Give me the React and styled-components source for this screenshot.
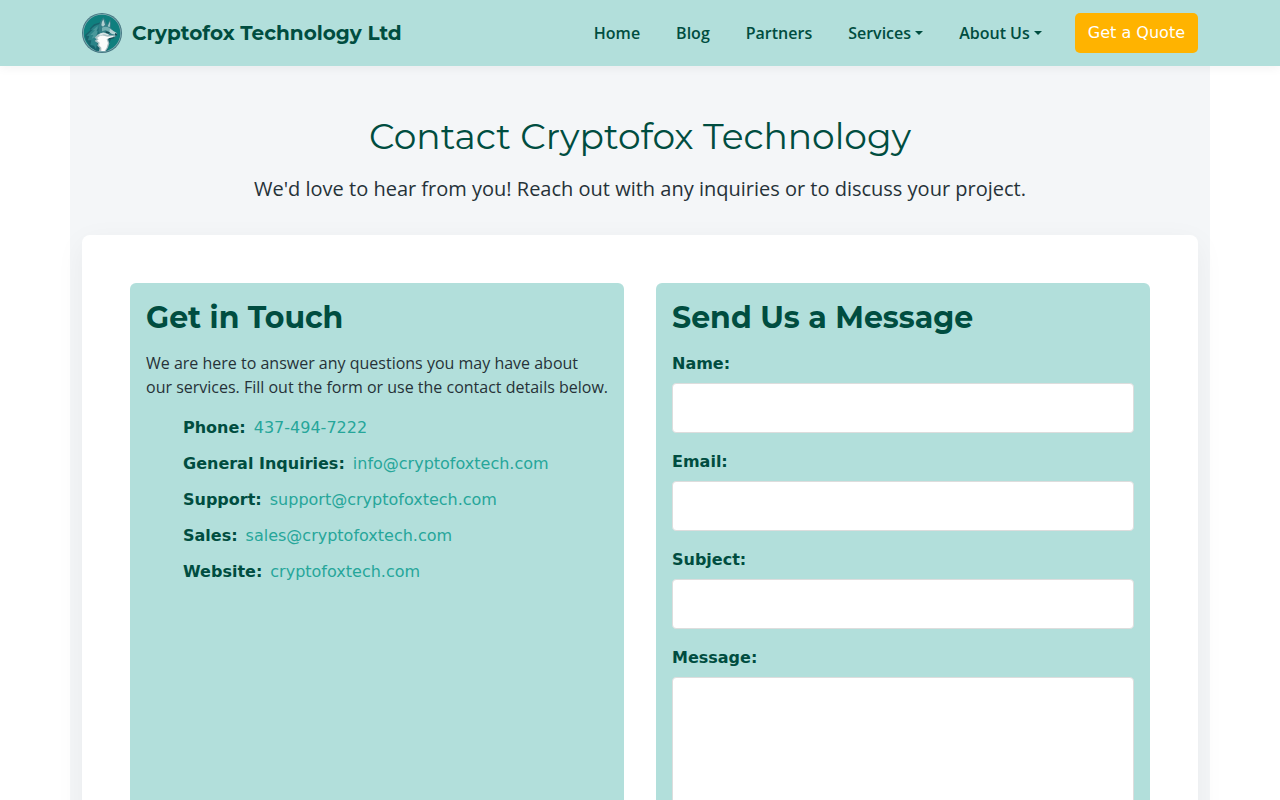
import React from "react";
import styled, { createGlobalStyle } from "styled-components";

const heading = `"Montserrat", "Inter", "Liberation Sans", sans-serif`;
const body = `"Open Sans", "Noto Sans", sans-serif`;
const system = `"DejaVu Sans", sans-serif`;

const GlobalStyle = createGlobalStyle`
  *, *::before, *::after { box-sizing: border-box; }
  html, body, #root { height: 100%; }
  body {
    margin: 0;
    overflow: hidden;
    background: #fff;
    color: #263238;
    font: 400 16px/24px ${system};
  }
`;

const Page = styled.div`
  height: 100vh;
  overflow: hidden;
`;

const Navbar = styled.header`
  position: relative;
  z-index: 1;
  height: 66px;
  background: #b2dfdb;
  box-shadow: 0 2px 10px rgba(0, 0, 0, 0.05);
`;

const NavInner = styled.div`
  width: 1140px;
  height: 100%;
  margin: 0 auto;
  padding: 0 12px;
  display: flex;
  align-items: center;
  justify-content: space-between;
`;

const Brand = styled.a`
  display: flex;
  align-items: center;
  gap: 10px;
  color: #004d40;
  font: 700 20px/30px ${heading};
  white-space: nowrap;
`;

const Logo = styled.svg`
  width: 40px;
  height: 40px;
  display: block;
`;

const Nav = styled.nav`
  display: flex;
  align-items: center;
  gap: 36px;
`;

const NavLink = styled.a`
  display: flex;
  align-items: center;
  color: #004d40;
  font: 600 16px/24px ${body};
  white-space: nowrap;
`;

const Caret = styled.span`
  margin-left: 4.08px;
  border: 4.8px solid transparent;
  border-top-color: currentColor;
  border-bottom: 0;
`;

const QuoteButton = styled.a`
  height: 40px;
  margin-left: -3px;
  padding: 8px 13px;
  border-radius: 5px;
  background: #ffb300;
  color: #fff;
  white-space: nowrap;
`;

const Main = styled.main`
  width: 1140px;
  margin: 0 auto;
  padding: 49px 12px 48px;
  background: #f4f6f8;
`;

const Title = styled.h1`
  margin: 0 0 16px;
  color: #004d40;
  font: 400 36px/43px ${heading};
  text-align: center;
`;

const Lead = styled.p`
  margin: 0 0 31px;
  font: 400 20px/30px ${body};
  text-align: center;
`;

const Card = styled.section`
  min-height: 700px;
  padding: 48px;
  display: grid;
  grid-template-columns: 1fr 1fr;
  gap: 32px;
  border-radius: 8px;
  background: #fff;
  box-shadow: 0 8px 30px rgba(0, 0, 0, 0.05);
`;

const Panel = styled.div`
  padding: 16px;
  border-radius: 6px;
  background: #b2dfdb;
`;

const PanelTitle = styled.h2`
  margin: 0 0 15px;
  padding-top: 1px;
  color: #004d40;
  font: 700 30px/36px ${heading};
`;

const Intro = styled.p`
  margin: 0 0 16px;
  font: 400 16px/24px ${body};
`;

const ContactList = styled.ul`
  margin: 0;
  padding: 1px 0 0 37px;
  display: grid;
  gap: 12px;
  list-style: none;
`;

const ContactItem = styled.li`
  display: flex;
  gap: 8px;
`;

const Label = styled.strong`
  color: #004d40;
  font-weight: 700;
`;

const ContactLink = styled.a`
  color: #26a69a;
`;

const Field = styled.label`
  display: grid;
  gap: 7px;
  margin-bottom: 16px;
  padding-top: 1px;
`;

const Input = styled.input`
  width: 100%;
  height: ${(p) => p.$height || 50}px;
  padding: 12px;
  border: 1px solid #ddd;
  border-radius: 4px;
  background: #fff;
  resize: none;
`;

const links = [
  { text: "Home" },
  { text: "Blog" },
  { text: "Partners" },
  { text: "Services", menu: true },
  { text: "About Us", menu: true },
];

const contacts = [
  ["Phone:", "437-494-7222"],
  ["General Inquiries:", "info@cryptofoxtech.com"],
  ["Support:", "support@cryptofoxtech.com"],
  ["Sales:", "sales@cryptofoxtech.com"],
  ["Website:", "cryptofoxtech.com"],
];

function FoxLogo() {
  return (
    <Logo viewBox="0 0 120 120" aria-hidden="true">
      <circle cx="60" cy="60" r="60" fill="#477884" />
      <circle cx="60" cy="60" r="57" fill="#86b0b5" />
      <circle cx="60" cy="60" r="55" fill="#0f7f7e" />
      <path d="M56 28 L36 34 L23 47 L26 50 L9 66 L12 80 L24 101 L42 113 L76 113 L82 91 L88 77Z" fill="#17636c" />
      <path d="M56 32 Q35 36 26 50 L32 50 L13 68 L22 69 L17 82 L28 82 L25 96 L36 98 L42 109 L46 88 L60 66Z" fill="#2a8388" />
      <path d="M47 39 L32 52 L39 52 L25 66 L34 66 L29 77 L40 73 L45 62Z" fill="#4a989b" />
      <path d="M52 40 L43 55 L51 52 L43 68 L59 58 L59 43Z" fill="#206d76" />
      <path d="M50 44 Q53 24 64 13 Q72 22 75 36 L85 18 Q89 34 86 44 L94 53 L105 60 Q108 67 102 72 L87 75 L74 79 L58 71 L50 54Z" fill="#347f87" />
      <path d="M58 37 Q59 26 64 19 L69 35 L63 41Z" fill="#b4cfd1" />
      <path d="M77 40 L84 25 Q85 35 83 43Z" fill="#a5c9cb" />
      <path d="M60 44 Q71 38 83 45 L94 55 L84 58 L71 52 L60 55Z" fill="#75b0b2" />
      <path d="M84 47 L94 54 L104 60 L102 65 L90 63 L82 58Z" fill="#b6d3d4" />
      <path d="M38 74 Q45 63 57 60 L72 65 L84 67 L100 67 L97 73 L84 76 L78 79 L82 91 L78 104 L71 115 L51 115 L53 105 L46 98 L48 91 L38 84 L44 79Z" fill="#a7bec2" />
      <path d="M45 75 Q54 65 66 68 L77 71 L94 69 L92 73 L79 76 L74 79 L78 90 L74 104 L68 114 L58 114 L58 104 L51 97 L53 89 L45 83 L50 79Z" fill="#fbfcfc" />
      <path d="M50 66 Q60 54 72 61 L82 64 L76 67 L64 64 L55 68Z" fill="#d9e6e7" />
      <path d="M71 55 L84 58 L80 62 L72 60Z" fill="#174b54" />
      <path d="M99 60 Q108 62 104 68 L99 66Z M79 76 L98 72 L96 76 L83 79Z" fill="#194c55" />
    </Logo>
  );
}

export default function App() {
  return (
    <Page>
      <GlobalStyle />
      <Navbar>
        <NavInner>
          <Brand>
            <FoxLogo />
            Cryptofox Technology Ltd
          </Brand>
          <Nav>
            {links.map(({ text, menu }) => (
              <NavLink key={text}>
                {text}
                {menu && <Caret />}
              </NavLink>
            ))}
            <QuoteButton>Get a Quote</QuoteButton>
          </Nav>
        </NavInner>
      </Navbar>
      <Main>
        <Title>Contact Cryptofox Technology</Title>
        <Lead>We'd love to hear from you! Reach out with any inquiries or to discuss your project.</Lead>
        <Card>
          <Panel>
            <PanelTitle>Get in Touch</PanelTitle>
            <Intro>
              We are here to answer any questions you may have about our services. Fill out the form or use the
              contact details below.
            </Intro>
            <ContactList>
              {contacts.map(([name, value]) => (
                <ContactItem key={name}>
                  <Label>{name}</Label>
                  <ContactLink>{value}</ContactLink>
                </ContactItem>
              ))}
            </ContactList>
          </Panel>
          <Panel>
            <PanelTitle>Send Us a Message</PanelTitle>
            {["Name:", "Email:", "Subject:"].map((name) => (
              <Field key={name}>
                <Label>{name}</Label>
                <Input />
              </Field>
            ))}
            <Field>
              <Label>Message:</Label>
              <Input as="textarea" $height={180} />
            </Field>
          </Panel>
        </Card>
      </Main>
    </Page>
  );
}
